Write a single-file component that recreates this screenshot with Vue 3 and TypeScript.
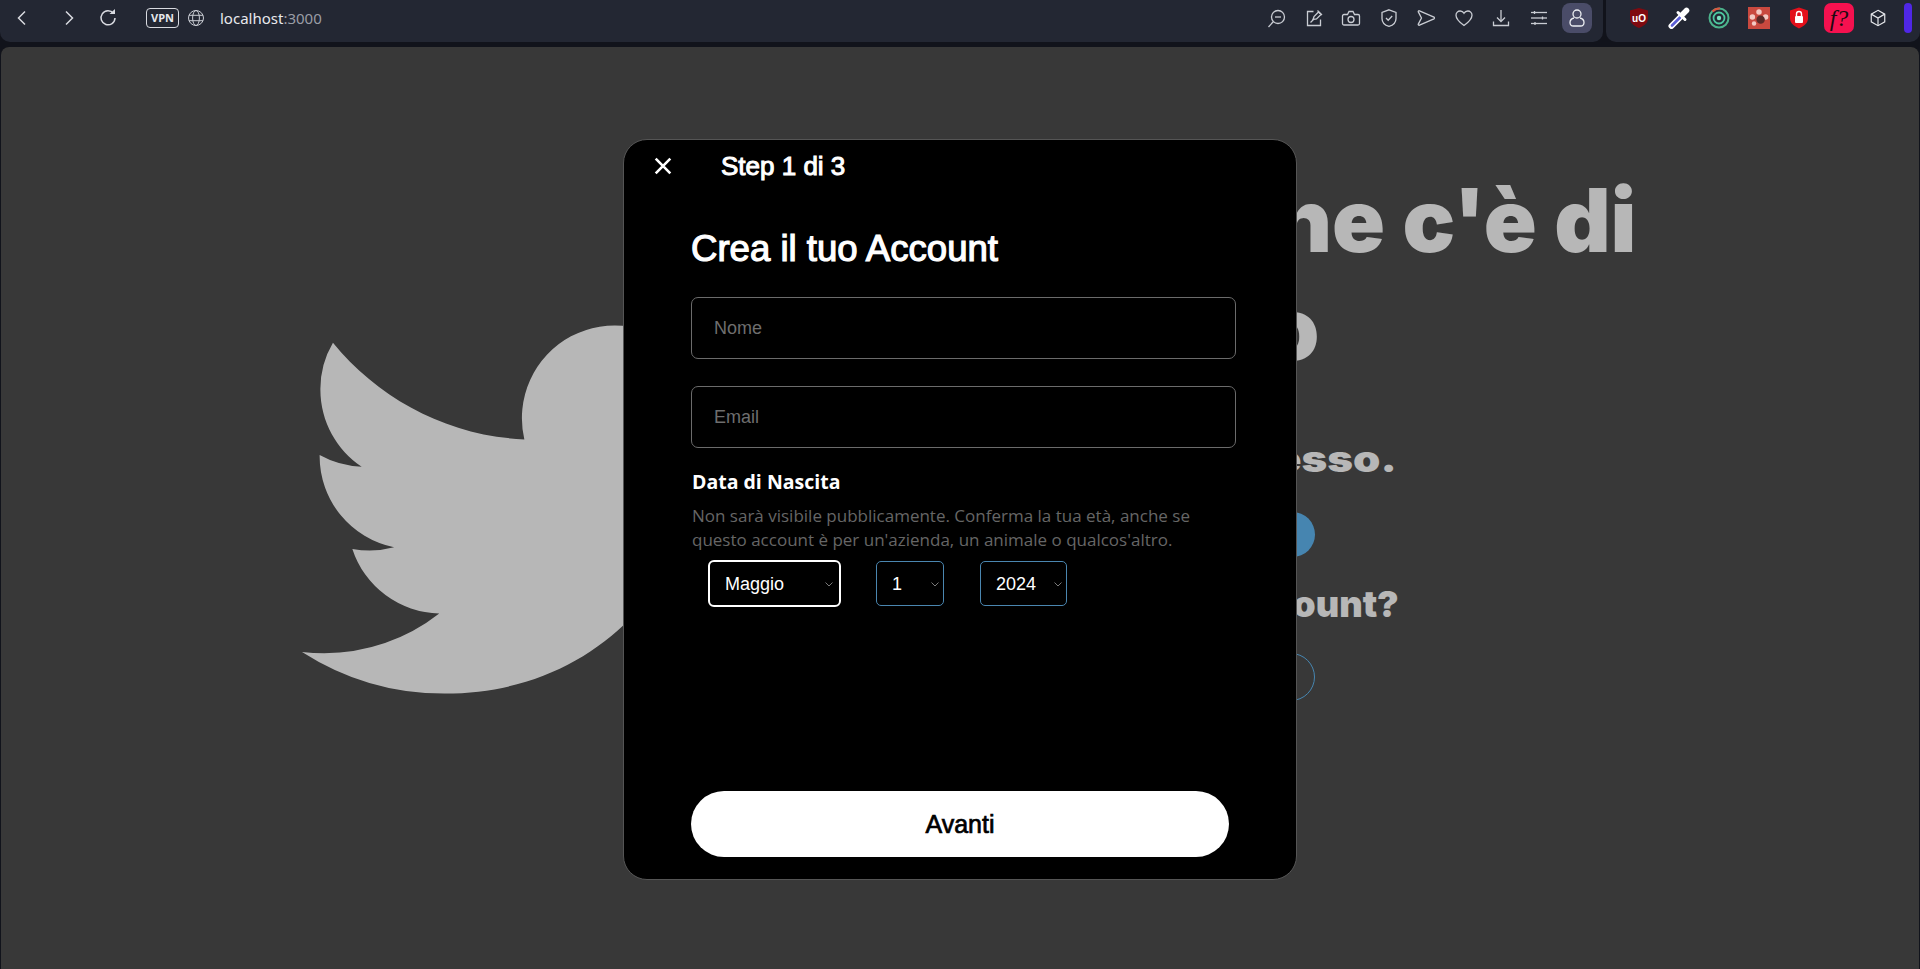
<script setup lang="ts">
import { ref } from 'vue'

const months = ['Gennaio', 'Febbraio', 'Marzo', 'Aprile', 'Maggio', 'Giugno', 'Luglio', 'Agosto', 'Settembre', 'Ottobre', 'Novembre', 'Dicembre']
const days = Array.from({ length: 31 }, (_, i) => i + 1)
const years = Array.from({ length: 80 }, (_, i) => 2024 - i)

const month = ref('Maggio')
const day = ref(1)
const year = ref(2024)

const birdPath = 'M23.953 4.57a10 10 0 01-2.825.775 4.958 4.958 0 002.163-2.723c-.951.555-2.005.959-3.127 1.184a4.92 4.92 0 00-8.384 4.482C7.69 8.095 4.067 6.13 1.64 3.162a4.822 4.822 0 00-.666 2.475c0 1.71.87 3.213 2.188 4.096a4.904 4.904 0 01-2.228-.616v.06a4.923 4.923 0 003.946 4.827 4.996 4.996 0 01-2.212.085 4.936 4.936 0 004.604 3.417 9.867 9.867 0 01-6.102 2.105c-.39 0-.779-.023-1.17-.067a13.995 13.995 0 007.557 2.209c9.053 0 13.998-7.496 13.998-13.985 0-.21 0-.42-.015-.63A9.935 9.935 0 0024 4.59z'

// icone della barra del browser
const toolIcons = [
  ['M12 2.500a6.500 6.500 0 1 1 0 13 6.500 6.500 0 0 1 0-13z', 'M9 9h6', 'M7.200 13.800L2.500 19'],
  ['M9.500 3.500H3.500v14h13v-6', 'M9 11.500l1-3 4.500-4.500 2.500 2.500-4.500 4.500z', 'M13.500 2.500l4.500 4.500', 'M6.500 14.500l3-3'],
  ['M3 6.500h3.500L8 3.500h4l1.500 3H17a1.500 1.500 0 0 1 1.500 1.500v7.500a1.500 1.500 0 0 1-1.500 1.500H3a1.500 1.500 0 0 1-1.500-1.500V8A1.500 1.500 0 0 1 3 6.500z', 'M10 8.500a3 3 0 1 1 0 6 3 3 0 0 1 0-6z'],
  ['M10 1.800l7 2.600v6c0 4-3 6.800-7 8-4-1.200-7-4-7-8v-6z', 'M7 10l2.200 2.200L13.200 8'],
  ['M3.500 2.800c-.8-.4-1.500.3-1.200 1.100L5.500 10l-3.200 6.100c-.3.8.4 1.500 1.200 1.100L18 10.800c.6-.3.6-1.300 0-1.600z'],
  ['M10 17.500C5 14 2 11 2 7.300 2 4.800 4 3 6.200 3 7.800 3 9.200 3.900 10 5.200 10.800 3.900 12.200 3 13.800 3 16 3 18 4.800 18 7.300c0 3.700-3 6.700-8 10.200z'],
  ['M10 2v11', 'M6 9.500l4 4 4-4', 'M2.500 13.500v4h15v-4'],
  ['M2 4.500h16', 'M2 10h16', 'M2 15.500h16', 'M5.500 3v3', 'M13.500 8.500v3', 'M6 14v3']
]
</script>

<template>
  <div class="window">
    <header class="chrome">
      <div class="toolbar">
        <div class="nav-buttons">
          <svg class="nav-icon" viewBox="0 0 20 20"><path d="M13 3.500L6.500 10l6.500 6.500" /></svg>
          <svg class="nav-icon" viewBox="0 0 20 20"><path d="M7 3.500l6.500 6.500L7 16.500" /></svg>
          <svg class="nav-icon reload" viewBox="0 0 20 20"><path d="M15.500 5.500A7 7 0 1 0 17 10" /><path class="filled" d="M11.500 6h5.500V1z" /></svg>
        </div>
        <span class="vpn">VPN</span>
        <svg class="globe" viewBox="0 0 18 18">
          <circle cx="9" cy="9" r="7.500" />
          <ellipse cx="9" cy="9" rx="3.400" ry="7.500" />
          <path d="M2 6.300h14M2 11.700h14" />
        </svg>
        <div class="address">localhost<span class="port">:3000</span></div>
        <div class="tools">
          <svg v-for="(icon, i) in toolIcons" :key="i" class="tool-icon" viewBox="0 0 20 20">
            <path v-for="d in icon" :key="d" :d="d" />
          </svg>
          <div class="profile">
            <svg class="tool-icon" viewBox="0 0 20 20">
              <path d="M10 2a4 4 0 1 1 0 8 4 4 0 0 1 0-8z" />
              <path d="M7 10c-2.500.6-4 2.300-4 4.500C3 16.500 4.500 18 6.500 18h7c2 0 3.500-1.500 3.500-3.500 0-2.200-1.500-3.900-4-4.500" />
            </svg>
          </div>
        </div>
      </div>
      <div class="extensions">
        <svg class="ext" viewBox="0 0 20 22">
          <path d="M10 1l9 2.500v8c0 4.500-4 7.500-9 9.500-5-2-9-5-9-9.500v-8z" fill="#800a10" />
          <text x="10" y="14.500" class="ublock">uO</text>
        </svg>
        <svg class="ext" viewBox="0 0 22 22">
          <path d="M3.500 19L12 10.500" stroke="#fff" stroke-width="6" stroke-linecap="round" />
          <path d="M4 18.500L12 10.500" stroke="#5b5ed6" stroke-width="2.600" stroke-linecap="round" />
          <path d="M10 5.500l7 7" stroke="#fff" stroke-width="3" stroke-linecap="round" />
          <path d="M14.500 7.500L18.500 3.500" stroke="#fff" stroke-width="5.500" stroke-linecap="round" />
        </svg>
        <svg class="ext" viewBox="0 0 22 22">
          <circle cx="11" cy="11" r="9.500" fill="none" stroke="#4cb38c" stroke-width="2" />
          <path d="M4.500 4.500A9.500 9.500 0 0 1 12 1.500" fill="none" stroke="#d9563f" stroke-width="2.200" />
          <circle cx="11" cy="11" r="5.500" fill="none" stroke="#4cc9a0" stroke-width="1.800" />
          <circle cx="11" cy="11" r="2.200" fill="#7be0c0" />
        </svg>
        <svg class="ext" viewBox="0 0 20 20">
          <rect width="20" height="20" fill="#c9493f" />
          <circle cx="10" cy="4.500" r="2.500" fill="#f3c9c3" />
          <circle cx="4" cy="9" r="2.500" fill="#f3c9c3" />
          <circle cx="16" cy="9" r="2.500" fill="#f3c9c3" />
          <circle cx="5.500" cy="15" r="2" fill="#f3c9c3" />
          <circle cx="11.500" cy="11.500" r="3.800" fill="#5a2a28" />
        </svg>
        <svg class="ext" viewBox="0 0 20 22">
          <path d="M10 .5l9 3v8c0 4.500-4 7.500-9 10-5-2.500-9-5.500-9-10v-8z" fill="#e3101c" />
          <rect x="6" y="9" width="8" height="7" rx="1" fill="#fff" />
          <path d="M7.500 9V7a2.500 2.500 0 0 1 5 0v2" fill="none" stroke="#fff" stroke-width="1.400" />
        </svg>
        <div class="whatfont">f?</div>
        <svg class="cube" viewBox="0 0 20 20">
          <path d="M10 1.500l7.500 4.200v8.600L10 18.500l-7.500-4.200V5.700z" />
          <path d="M2.500 5.700L10 10l7.500-4.300M10 10v8.500" />
        </svg>
        <span class="purple-bar"></span>
      </div>
    </header>

    <main class="page">
      <div class="landing">
        <svg class="bird" viewBox="0 0 24 24"><path :d="birdPath" /></svg>
        <section class="intro">
          <h1 class="headline">Ecco ne c'è di nuovo</h1>
          <h2 class="subhead first">Iscriviti adesso.</h2>
          <button class="cta primary" type="button">Iscriviti</button>
          <h3 class="subhead second">Hai già un account?</h3>
          <button class="cta outline" type="button">Accedi</button>
        </section>
      </div>

      <div class="overlay">
        <div class="modal">
          <div class="modal-head">
            <svg class="close" viewBox="0 0 16 16"><path d="M1.500 1.500l13 13M14.500 1.500l-13 13" /></svg>
            <span class="step">Step 1 di 3</span>
          </div>
          <div class="modal-body">
            <h2 class="title">Crea il tuo Account</h2>
            <input class="field" type="text" placeholder="Nome" />
            <input class="field" type="email" placeholder="Email" />
            <h4 class="dob-label">Data di Nascita</h4>
            <p class="dob-text">Non sarà visibile pubblicamente. Conferma la tua età, anche se questo account è per un'azienda, un animale o qualcos'altro.</p>
            <div class="selects">
              <label class="select-wrap">
                <select v-model="month" class="select month">
                  <option v-for="m in months" :key="m">{{ m }}</option>
                </select>
                <svg class="chevron month-chevron" viewBox="0 0 8 5"><path d="M.5.5L4 4 7.500.5" /></svg>
              </label>
              <label class="select-wrap">
                <select v-model="day" class="select day">
                  <option v-for="d in days" :key="d">{{ d }}</option>
                </select>
                <svg class="chevron" viewBox="0 0 8 5"><path d="M.5.5L4 4 7.500.5" /></svg>
              </label>
              <label class="select-wrap">
                <select v-model="year" class="select year">
                  <option v-for="y in years" :key="y">{{ y }}</option>
                </select>
                <svg class="chevron" viewBox="0 0 8 5"><path d="M.5.5L4 4 7.500.5" /></svg>
              </label>
            </div>
            <button class="next" type="button">Avanti</button>
          </div>
        </div>
      </div>
    </main>
  </div>
</template>

<style>
html,
body {
  margin: 0;
  background: #11131b;
}
</style>

<style scoped>
.window {
  width: 1920px;
  height: 969px;
  display: flex;
  flex-direction: column;
  overflow: hidden;
  background: #11131b;
  font-family: "Liberation Sans", Arial, sans-serif;
}

/* barra del browser */
.chrome {
  height: 47px;
  flex: none;
  display: flex;
  gap: 3px;
  align-items: flex-start;
}

.toolbar {
  width: 1603px;
  height: 42px;
  padding: 0 11px 6px 12px;
  box-sizing: border-box;
  display: flex;
  align-items: center;
  background: #232733;
  border-radius: 0 0 10px 10px;
}

.nav-buttons {
  display: flex;
  gap: 27px;
}

.nav-icon {
  width: 20px;
  height: 20px;
  fill: none;
  stroke: #d8dae0;
  stroke-width: 1.500;
}

.nav-icon .filled {
  fill: #d8dae0;
  stroke: none;
}

.reload {
  margin-left: -8px;
}

.vpn {
  margin-left: 28px;
  width: 33px;
  height: 20px;
  box-sizing: border-box;
  border: 1px solid #d8dae0;
  border-radius: 4px;
  color: #e6e7eb;
  font-size: 11px;
  font-weight: 700;
  line-height: 18px;
  text-align: center;
  font-family: "Open Sans", sans-serif;
}

.globe {
  margin-left: 8px;
  width: 18px;
  height: 18px;
  fill: none;
  stroke: #c9ccd3;
  stroke-width: 1;
}

.address {
  margin-left: 15px;
  color: #e8e9ed;
  font-size: 15px;
  font-family: "Noto Sans", sans-serif;
}

.port {
  color: #9a9da6;
}

.tools {
  margin-left: auto;
  display: flex;
  align-items: center;
  gap: 17.500px;
}

.tool-icon {
  width: 20px;
  height: 20px;
  fill: none;
  stroke: #c9ccd3;
  stroke-width: 1.300;
}

.profile {
  width: 30px;
  height: 30px;
  margin-left: -4px;
  display: flex;
  align-items: center;
  justify-content: center;
  background: #4a4c68;
  border-radius: 8px;
}

.profile .tool-icon {
  stroke: #eceef2;
}

.extensions {
  flex: 1;
  height: 42px;
  padding: 0 8px 6px 22px;
  box-sizing: border-box;
  display: flex;
  align-items: center;
  gap: 18px;
  background: #232733;
  border-radius: 0 0 10px 10px;
}

.ext {
  width: 22px;
  height: 22px;
  flex: none;
}

.ublock {
  fill: #fff;
  font-size: 10px;
  font-weight: 700;
  text-anchor: middle;
  font-family: "Liberation Sans", sans-serif;
}

.whatfont {
  width: 30px;
  height: 30px;
  margin: 0 -4px;
  flex: none;
  background: #f5114f;
  border-radius: 7px;
  color: #1d0a10;
  font-family: "Liberation Serif", serif;
  font-style: italic;
  font-size: 24px;
  line-height: 30px;
  text-align: center;
}

.cube {
  width: 18px;
  height: 18px;
  margin-left: 1px;
  flex: none;
  fill: none;
  stroke: #e6e7eb;
  stroke-width: 1.300;
}

.purple-bar {
  width: 8px;
  height: 30px;
  margin-left: -1px;
  flex: none;
  background: #4f27e6;
  border-radius: 4px;
}

/* pagina */
.page {
  position: relative;
  flex: 1;
  margin: 0 1px;
  background: #000;
  border-radius: 8px 8px 0 0;
  overflow: hidden;
}

.landing {
  height: 100%;
  padding-left: 301px;
  display: flex;
  align-items: center;
  color: #fff;
}

.bird {
  width: 453px;
  height: 453px;
  margin-top: 2px;
  flex: none;
  fill: #fff;
}

.intro {
  align-self: flex-start;
  margin: 119px 0 0 289px;
  width: 620px;
  font-family: Inter, sans-serif;
}

.headline {
  margin: 0;
  font-size: 87.500px;
  font-weight: 900;
  line-height: 108px;
}

.subhead {
  margin: 55px 0 0;
  font-size: 36.200px;
  font-weight: 900;
  line-height: 44px;
}

/* il testo di riferimento è più largo */
.subhead.first {
  width: fit-content;
  transform: scaleX(1.21);
  transform-origin: left center;
}

.subhead.second {
  margin-top: 25px;
}

.cta {
  display: block;
  width: 271px;
  height: 45px;
  margin-top: 31px;
  border-radius: 23px;
  font-size: 16px;
  font-weight: 700;
  color: #fff;
}

.primary {
  background: #1d9bf0;
  border: none;
}

.outline {
  height: 48px;
  margin-top: 27px;
  background: transparent;
  border: 1px solid #1d9bf0;
  border-radius: 24px;
}

.overlay {
  position: absolute;
  inset: 0;
  display: flex;
  align-items: center;
  justify-content: center;
  background: rgba(112, 112, 112, 0.5);
}

/* finestra di registrazione */
.modal {
  width: 674px;
  height: 741px;
  margin-top: 3px;
  box-sizing: border-box;
  display: flex;
  flex-direction: column;
  background: #000;
  border: 1px solid #555;
  border-radius: 24px;
  color: #fff;
}

.modal-head {
  height: 52px;
  padding-left: 30px;
  flex: none;
  display: flex;
  align-items: center;
}

.close {
  width: 18px;
  height: 18px;
  fill: none;
  stroke: #fff;
  stroke-width: 2.300;
}

.step {
  margin-left: 49px;
  font-size: 26px;
  -webkit-text-stroke: 1px #fff;
}

.modal-body {
  flex: 1;
  padding: 0 60px 22px 67px;
  display: flex;
  flex-direction: column;
}

.title {
  margin: 33px 0 24px;
  font-size: 36.600px;
  font-weight: 400;
  line-height: 48px;
  -webkit-text-stroke: 1.200px #fff;
}

.field {
  height: 62px;
  flex: none;
  box-sizing: border-box;
  margin-bottom: 27px;
  padding: 0 22px;
  background: #000;
  border: 1px solid #6b6b6b;
  border-radius: 7px;
  color: #fff;
  font-family: inherit;
  font-size: 18px;
  outline: none;
}

.field::placeholder {
  color: #6e6e6e;
}

.dob-label {
  margin: -7px 0 0 1px;
  font-family: "Open Sans", sans-serif;
  font-size: 19.500px;
  font-weight: 700;
  line-height: 28px;
}

.dob-text {
  margin: 8px 0 0 1px;
  color: #666;
  font-family: "Open Sans", sans-serif;
  font-size: 17px;
  line-height: 24px;
}

.selects {
  margin: 8px 0 0 17px;
  display: flex;
  align-items: center;
  gap: 35px;
}

.select-wrap {
  position: relative;
  display: flex;
}

.select-wrap:nth-child(2) {
  margin-right: 1px;
}

.select {
  appearance: none;
  height: 45px;
  box-sizing: border-box;
  padding: 0 0 0 15px;
  background: #000;
  border: 1px solid #4a86b0;
  border-radius: 5px;
  color: #fff;
  font-family: inherit;
  font-size: 18px;
  outline: none;
}

.select.month {
  width: 133px;
  height: 47px;
  border: 2px solid #fff;
  border-radius: 6px;
}

.select.day {
  width: 68px;
}

.select.year {
  width: 87px;
}

.chevron {
  position: absolute;
  top: 50%;
  right: 5px;
  width: 8px;
  height: 5px;
  margin-top: -2px;
  fill: none;
  stroke: #7a7a7a;
  stroke-width: 1;
  pointer-events: none;
}

.month-chevron {
  right: 8px;
}

.next {
  width: 538px;
  height: 66px;
  margin-top: auto;
  flex: none;
  background: #fff;
  border: none;
  border-radius: 33px;
  color: #000;
  font-family: inherit;
  font-size: 25px;
  -webkit-text-stroke: 0.700px #000;
}
</style>
